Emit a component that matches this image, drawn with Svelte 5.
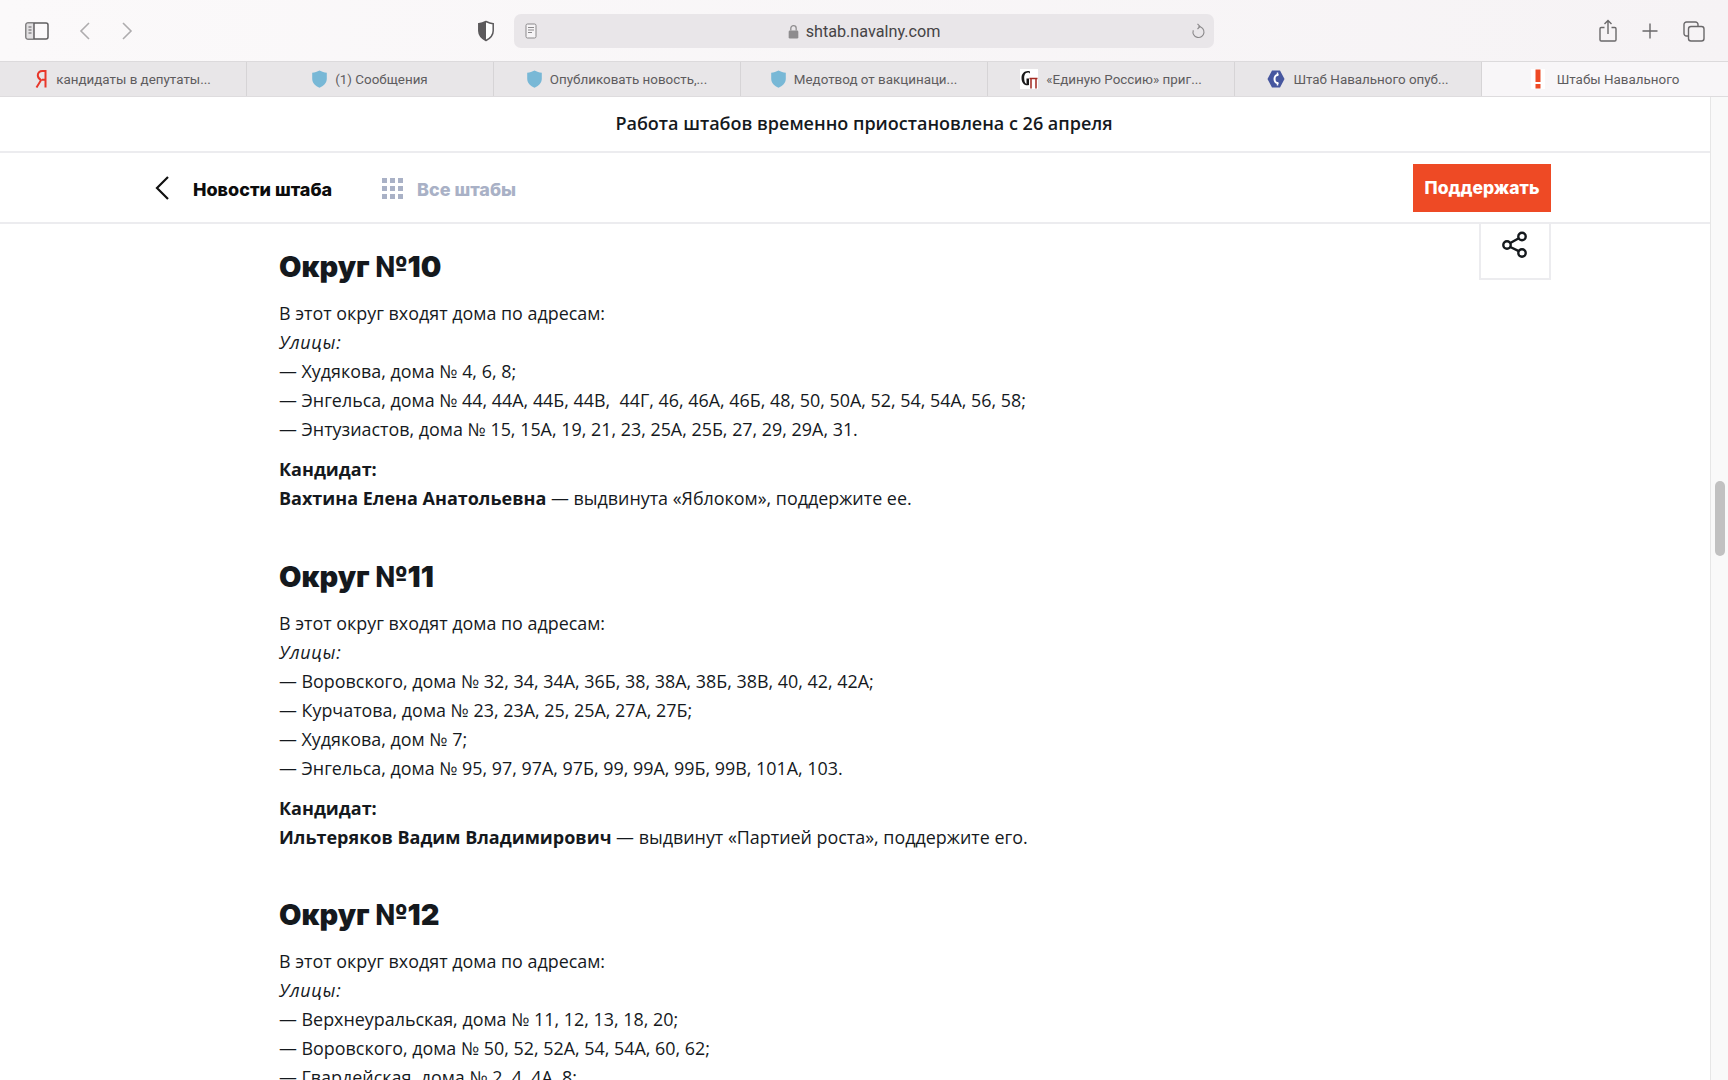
<script lang="ts">
  type Tab = { title: string; icon: string; active?: boolean };

  const tabs: Tab[] = [
    { title: 'кандидаты в депутаты...', icon: 'ya' },
    { title: '(1) Сообщения', icon: 'shield' },
    { title: 'Опубликовать новость,...', icon: 'shield' },
    { title: 'Медотвод от вакцинаци...', icon: 'shield' },
    { title: '«Единую Россию» приг...', icon: 'gp' },
    { title: 'Штаб Навального опуб...', icon: 'hex' },
    { title: 'Штабы Навального', icon: 'excl', active: true },
  ];

  type District = { name: string; streets: string[]; person: string; tail: string };

  const districts: District[] = [
    {
      name: 'Округ №10',
      streets: [
        '— Худякова, дома № 4, 6, 8;',
        '— Энгельса, дома № 44, 44А, 44Б, 44В,  44Г, 46, 46А, 46Б, 48, 50, 50А, 52, 54, 54А, 56, 58;',
        '— Энтузиастов, дома № 15, 15А, 19, 21, 23, 25А, 25Б, 27, 29, 29А, 31.',
      ],
      person: 'Вахтина Елена Анатольевна',
      tail: ' — выдвинута «Яблоком», поддержите ее.',
    },
    {
      name: 'Округ №11',
      streets: [
        '— Воровского, дома № 32, 34, 34А, 36Б, 38, 38А, 38Б, 38В, 40, 42, 42А;',
        '— Курчатова, дома № 23, 23А, 25, 25А, 27А, 27Б;',
        '— Худякова, дом № 7;',
        '— Энгельса, дома № 95, 97, 97А, 97Б, 99, 99А, 99Б, 99В, 101А, 103.',
      ],
      person: 'Ильтеряков Вадим Владимирович',
      tail: ' — выдвинут «Партией роста», поддержите его.',
    },
    {
      name: 'Округ №12',
      streets: [
        '— Верхнеуральская, дома № 11, 12, 13, 18, 20;',
        '— Воровского, дома № 50, 52, 52А, 54, 54А, 60, 62;',
        '— Гвардейская, дома № 2, 4, 4А, 8;',
      ],
      person: '',
      tail: '',
    },
  ];
</script>

<div class="page">
  <header class="toolbar">
    <div class="tool-left">
      <svg class="sidebar-icon" width="24" height="20" viewBox="0 0 24 20" fill="none">
        <rect x="1" y="2" width="22" height="16" rx="2" stroke="#5f5d5f" stroke-width="1.5" />
        <rect x="1.5" y="2.5" width="7.5" height="15" fill="#e2e0e2" />
        <path d="M9 2v16" stroke="#5f5d5f" stroke-width="1.5" />
        <path d="M3.5 6h3M3.5 9h3M3.5 12h3" stroke="#5f5d5f" stroke-width="1.2" />
      </svg>
      <svg class="back-icon" width="12" height="20" viewBox="0 0 12 20" fill="none">
        <path d="M10 2 2 10l8 8" stroke="#aeacae" stroke-width="1.6" />
      </svg>
      <svg class="fwd-icon" width="12" height="20" viewBox="0 0 12 20" fill="none">
        <path d="m2 2 8 8-8 8" stroke="#aeacae" stroke-width="1.6" />
      </svg>
    </div>
    <svg class="shield-btn" width="18" height="22" viewBox="0 0 18 22">
      <path d="M9 1.5c2.6 1.3 5 2 7.2 2.2v7c0 4.400-3 7.600-7.200 9.800C4.800 18.300 1.800 15.100 1.800 10.700v-7C4 3.500 6.400 2.800 9 1.500z" fill="#fff" stroke="#5c5a5c" stroke-width="1.5" />
      <path d="M9 1.500v19c-4.200-2.200-7.200-5.400-7.200-9.800v-7C4 3.500 6.400 2.800 9 1.500z" fill="#5c5a5c" />
    </svg>
    <div class="urlbar">
      <svg class="reader" width="12" height="16" viewBox="0 0 12 16" fill="none">
        <rect x="1" y="1" width="10" height="14" rx="1.500" fill="#f6f4f6" stroke="#8b898b" />
        <path d="M3 4.500h6M3 7h6M3 9.500h4" stroke="#8b898b" />
      </svg>
      <span class="url">
        <svg width="11" height="15" viewBox="0 0 10 14" fill="none">
          <path d="M2.500 6V4a2.500 2.500 0 0 1 5 0v2" stroke="#8e8c8e" stroke-width="1.200" />
          <rect x="0.500" y="6" width="9" height="7.500" rx="1.200" fill="#8e8c8e" />
        </svg>
        shtab.navalny.com
      </span>
      <svg class="reload" width="14" height="17" viewBox="0 0 14 17" fill="none">
        <path d="M7.500 3.500A5.500 5.500 0 1 1 2.300 7.200" stroke="#8b898b" stroke-width="1.100" />
        <path d="M6.500 0.800 9 3.500 6.500 6" stroke="#8b898b" stroke-width="1.100" />
      </svg>
    </div>
    <div class="tool-right">
      <svg width="18" height="24" viewBox="0 0 18 24" fill="none">
        <path d="M5.500 8.500H2.200A1.200 1.200 0 0 0 1 9.700v11.100A1.200 1.200 0 0 0 2.200 22h13.600a1.200 1.200 0 0 0 1.200-1.200V9.700a1.200 1.200 0 0 0-1.200-1.200h-3.300" stroke="#6a686a" stroke-width="1.400" />
        <path d="M9 15V1.500M5.500 5 9 1.500 12.500 5" stroke="#6a686a" stroke-width="1.400" />
      </svg>
      <svg width="16" height="16" viewBox="0 0 16 16" fill="none">
        <path d="M8 0.500v15M0.500 8h15" stroke="#6a686a" stroke-width="1.400" />
      </svg>
      <svg width="22" height="21" viewBox="0 0 22 21" fill="none">
        <rect x="5.500" y="5.500" width="15.500" height="14.500" rx="2.500" stroke="#6a686a" stroke-width="1.400" />
        <path d="M5.500 15H3.500A2.500 2.500 0 0 1 1 12.500v-9A2.500 2.500 0 0 1 3.500 1h9A2.500 2.500 0 0 1 15 3.500v2" stroke="#6a686a" stroke-width="1.400" />
      </svg>
    </div>
  </header>

  <nav class="tabs">
    {#each tabs as tab}
      <div class="tab" class:active={tab.active}>
        {#if tab.icon === 'ya'}
          <svg width="13" height="18" viewBox="0 0 13 18" fill="none">
            <path d="M10.500 17.500V1H7.500C4.500 1 2.800 2.800 2.800 5.300S4 9 6 10.200L1.500 17.500M10.500 9.800H7" stroke="#e8372a" stroke-width="2" />
          </svg>
        {:else if tab.icon === 'shield'}
          <svg width="15" height="18" viewBox="0 0 15 18">
            <path d="M7.500 0.500C9.800 1.800 12.200 2.500 14.800 2.700v6C14.800 13 11.500 16 7.500 17.800 3.500 16 0.200 13 0.200 8.700v-6C2.800 2.500 5.200 1.800 7.500 0.500z" fill="#78b8d6" />
          </svg>
        {:else if tab.icon === 'gp'}
          <svg width="18" height="20" viewBox="0 0 18 20">
            <rect width="18" height="20" fill="#fff" />
            <path d="M10 2.500C5.500 1 1.500 4 1.500 9s3.500 8.500 7.500 7V9.500H6.500V15C4.500 14 4.200 11.500 4.200 9S5 3.500 8 3.500c1 0 1.500.5 2 1z" fill="#1a1a1a" />
            <path d="M9.500 9.500h8M11 9.500v10M16 9.500v10" stroke="#a32a22" stroke-width="1.500" fill="none" />
          </svg>
        {:else if tab.icon === 'hex'}
          <svg width="18" height="18" viewBox="0 0 18 18">
            <path d="M5 0.500h8l4.500 8.500-4.500 8.500H5L0.500 9z" fill="#47579f" />
            <path d="M11.500 5C9 4.500 7.500 6.500 7.500 9s1.500 4.500 4 4" stroke="#fff" stroke-width="2" fill="none" />
            <path d="M10.500 2.500v2M10.500 13.500v2" stroke="#fff" stroke-width="1.500" />
          </svg>
        {:else}
          <svg width="14" height="20" viewBox="0 0 14 20">
            <rect width="14" height="20" fill="#fff" />
            <rect x="4.500" y="0.500" width="5" height="12.500" fill="#ee4a25" />
            <rect x="4.500" y="15" width="5" height="4.500" fill="#ee4a25" />
          </svg>
        {/if}
        <span>{tab.title}</span>
      </div>
    {/each}
  </nav>

  <div class="viewport">
    <div class="site">
      <div class="notice">Работа штабов временно приостановлена с 26 апреля</div>

      <div class="sitenav">
        <svg class="nav-back" width="16" height="26" viewBox="0 0 16 26" fill="none">
          <path d="M14 2 3 13l11 11" stroke="#111" stroke-width="2.200" />
        </svg>
        <span class="nav-title">Новости штаба</span>
        <span class="nav-grid">
          {#each Array(9) as _}
            <i></i>
          {/each}
        </span>
        <span class="nav-all">Все штабы</span>
        <button class="support">Поддержать</button>
      </div>

      <div class="content">
        <div class="share">
          <svg width="28" height="28" viewBox="0 0 28 28" fill="none" stroke="#15191d" stroke-width="2.400">
            <circle cx="21" cy="5.500" r="3.700" />
            <circle cx="21" cy="22" r="3.700" />
            <circle cx="6" cy="14" r="3.700" />
            <path d="m9.300 12 8.500-4.800M9.300 16l8.500 4.200" />
          </svg>
        </div>

        {#each districts as d}
          <section class="district">
            <h2>{d.name}</h2>
            <div class="block">
              <div>В этот округ входят дома по адресам:</div>
              <div><em>Улицы:</em></div>
              {#each d.streets as line}
                <div class="street">{line}</div>
              {/each}
            </div>
            {#if d.person}
              <div class="block">
                <div><strong>Кандидат:</strong></div>
                <div><strong>{d.person}</strong>{d.tail}</div>
              </div>
            {/if}
          </section>
        {/each}
      </div>
    </div>

    <div class="scrollbar">
      <div class="thumb"></div>
    </div>
  </div>
</div>

<style>
  :global(body) {
    margin: 0;
    background: #fff;
  }

  .page {
    height: 1080px;
    overflow: hidden;
    display: flex;
    flex-direction: column;
  }

  .toolbar {
    height: 62px;
    flex: none;
    display: flex;
    align-items: center;
    background: linear-gradient(90deg, #fbf9fa 0%, #f6f3f5 100%);
    box-shadow: inset 0 -1px 0 #dcdadc;
  }

  .tool-left {
    display: flex;
    align-items: center;
    width: 477px;
    padding-left: 25px;
    box-sizing: border-box;
  }

  .sidebar-icon {
    margin-right: 30px;
  }

  .back-icon {
    margin-right: 30px;
  }

  .shield-btn {
    margin-right: 19px;
  }

  .urlbar {
    width: 700px;
    height: 34px;
    border-radius: 7px;
    background: #e9e6e9;
    display: flex;
    align-items: center;
    justify-content: space-between;
    padding: 0 9px 0 11px;
    box-sizing: border-box;
  }

  .url {
    display: flex;
    align-items: center;
    gap: 7px;
    font-family: Roboto, sans-serif;
    font-size: 16.200px;
    color: #454345;
  }

  .tool-right {
    display: flex;
    align-items: center;
    margin-left: 385px;
    gap: 25px;
  }

  .tabs {
    height: 35px;
    flex: none;
    display: flex;
    background: #e8e6e8;
    border-bottom: 1px solid #dedcde;
    box-sizing: border-box;
  }

  .tab {
    width: 247px;
    flex: none;
    display: flex;
    align-items: center;
    justify-content: center;
    gap: 8px;
    border-right: 1px solid #d6d4d6;
    box-sizing: border-box;
    font-family: Roboto, sans-serif;
    font-size: 13.400px;
    color: #5e5c5e;
    white-space: nowrap;
  }

  .tab.active {
    width: 246px;
    background: #f8f6f8;
    border-right: none;
    gap: 12px;
  }

  .viewport {
    flex: 1;
    min-height: 0;
    display: flex;
  }

  .site {
    flex: 1;
    min-width: 0;
    display: flex;
    flex-direction: column;
  }

  .notice {
    height: 56px;
    flex: none;
    display: flex;
    align-items: center;
    justify-content: center;
    padding: 0 0 2px 18px;
    border-bottom: 2px solid #ececef;
    box-sizing: border-box;
    font-family: 'Open Sans', sans-serif;
    font-weight: 600;
    font-size: 18px;
    color: #15191d;
  }

  .sitenav {
    height: 71px;
    flex: none;
    display: flex;
    align-items: center;
    padding: 0 159px 0 154px;
    border-bottom: 2px solid #ececef;
    box-sizing: border-box;
    font-family: Inter, sans-serif;
    font-weight: 800;
    font-size: 18px;
  }

  .nav-back {
    margin-right: 23px;
  }

  .nav-title {
    color: #0c0c0c;
    width: 190px;
    padding-top: 3px;
  }

  .nav-grid {
    display: grid;
    grid-template-columns: repeat(3, 5px);
    gap: 3px;
    margin-right: 14px;
    margin-left: -1px;
    padding-top: 2px;
  }

  .nav-grid i {
    width: 5px;
    height: 5px;
    background: #a9b1c6;
  }

  .nav-all {
    color: #a9b1c6;
    padding-top: 3px;
  }

  .support {
    margin-left: auto;
    width: 138px;
    height: 48px;
    border: none;
    background: #ee4a25;
    color: #fff;
    font: inherit;
    font-size: 17.500px;
    padding: 0;
  }

  .content {
    position: relative;
    padding: 0 0 0 279px;
  }

  .share {
    position: absolute;
    top: 0;
    left: 1479px;
    width: 72px;
    height: 56px;
    box-sizing: border-box;
    border: 2px solid #ececef;
    border-top: none;
    display: flex;
    justify-content: center;
    padding-top: 7px;
  }

  .district {
    padding-top: 25px;
    margin-bottom: 24.500px;
  }

  .district + .district {
    padding-top: 21px;
  }

  h2 {
    margin: 0 0 14px;
    font-family: Inter, sans-serif;
    font-weight: 900;
    font-size: 29px;
    line-height: 36px;
    color: #15191d;
  }

  .block {
    margin: 0 0 11px;
    font-family: 'Open Sans', sans-serif;
    font-size: 17.900px;
    line-height: 29px;
    color: #15191d;
  }

  .street {
    white-space: pre-wrap;
  }

  em {
    letter-spacing: 0.700px;
  }

  strong {
    font-weight: 700;
    font-size: 18px;
  }

  .scrollbar {
    width: 18px;
    flex: none;
    background: #f9f9f9;
    border-left: 1px solid #e6e6e6;
    box-sizing: border-box;
    padding-top: 384px;
  }

  .thumb {
    width: 10px;
    height: 75px;
    margin-left: 4px;
    border-radius: 5px;
    background: #c1c1c1;
  }
</style>
